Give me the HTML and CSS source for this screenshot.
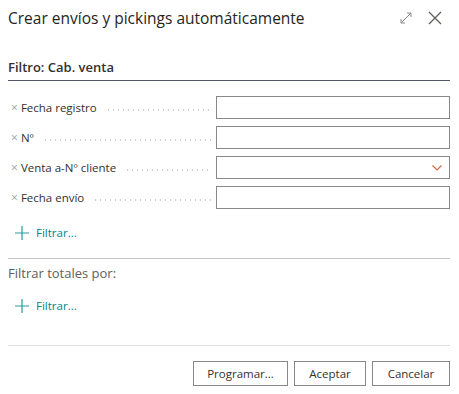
FILE: index.html
```html
<!DOCTYPE html>
<html lang="es">
<head>
  <meta charset="UTF-8">
  <title>Crear envíos y pickings automáticamente</title>
  <link rel="stylesheet" href="styles.css">
</head>
<body>
  <div class="dialog">
    <header class="dialog-head">
      <h1>Crear envíos y pickings automáticamente</h1>
      <div class="head-icons">
        <svg class="icon" width="14" height="14" viewBox="0 0 14 14">
          <path d="M2 12 L12 2 M8 2 H12 V6 M2 8 V12 H6" fill="none" stroke="#8a8886" stroke-width="1"/>
        </svg>
        <svg class="icon close" width="14" height="14" viewBox="0 0 14 14">
          <path d="M1 1 L13 13 M13 1 L1 13" fill="none" stroke="#605e5c" stroke-width="1.3"/>
        </svg>
      </div>
    </header>

    <h2 class="section-title">Filtro: Cab. venta</h2>

    <div class="filters">
      <div class="filter-row">
        <label class="filter-label"><span class="remove">×</span><span class="name">Fecha registro</span><span class="leader"></span></label>
        <div class="field"></div>
      </div>
      <div class="filter-row">
        <label class="filter-label"><span class="remove">×</span><span class="name">Nº</span><span class="leader"></span></label>
        <div class="field"></div>
      </div>
      <div class="filter-row">
        <label class="filter-label"><span class="remove">×</span><span class="name">Venta a-Nº cliente</span><span class="leader"></span></label>
        <div class="field select">
          <svg width="10" height="6" viewBox="0 0 10 6"><path d="M0.5 0.5 L5 5 L9.5 0.5" fill="none" stroke="#d06a3c" stroke-width="1.2"/></svg>
        </div>
      </div>
      <div class="filter-row">
        <label class="filter-label"><span class="remove">×</span><span class="name">Fecha envío</span><span class="leader"></span></label>
        <div class="field"></div>
      </div>
    </div>

    <a class="add-filter first">
      <svg width="14" height="14" viewBox="0 0 14 14"><path d="M7 0 V14 M0 7 H14" stroke="#2a9c9c" stroke-width="1.2"/></svg>
      Filtrar...
    </a>

    <div class="totals">
      <p class="totals-title">Filtrar totales por:</p>
      <a class="add-filter">
        <svg width="14" height="14" viewBox="0 0 14 14"><path d="M7 0 V14 M0 7 H14" stroke="#2a9c9c" stroke-width="1.2"/></svg>
        Filtrar...
      </a>
    </div>

    <footer class="dialog-foot">
      <button class="btn btn-prog">Programar...</button>
      <button class="btn btn-ok">Aceptar</button>
      <button class="btn btn-cancel">Cancelar</button>
    </footer>
  </div>
</body>
</html>
```

FILE: styles.css
```css
body {
  margin: 0;
  font-family: 'Open Sans', 'Noto Sans', sans-serif;
  color: #323130;
  background-color: white;
}
.dialog {
  width: 442px;
  padding: 0 9px 0 8px;
}
.dialog-head {
  display: flex;
  align-items: center;
  justify-content: space-between;
  height: 36px;
}
.dialog-head h1 {
  margin: 0;
  font-size: 15.5px;
  font-weight: 400;
  color: #252423;
}
.head-icons {
  display: flex;
  gap: 15px;
  align-items: center;
  margin-right: 8px;
}
.section-title {
  margin: 22px 0 0;
  font-size: 13px;
  font-weight: 600;
  padding-bottom: 4px;
  border-bottom: 1px solid #505a66;
}
.filters {
  display: flex;
  flex-direction: column;
  gap: 7px;
  margin-top: 15px;
}
.filter-row {
  display: flex;
  align-items: center;
}
.filter-label {
  display: flex;
  align-items: center;
  width: 208px;
  font-size: 11.5px;
  color: #323130;
}
.remove {
  color: #a19f9d;
  font-size: 12px;
  margin: 0 3px 0 3px;
}
.leader {
  flex: 1;
  height: 2px;
  margin: 4px 4px 0 9px;
  background-image: radial-gradient(circle, #cfcfcf 0.9px, transparent 1.1px);
  background-size: 5px 2px;
}
.field {
  flex: 1;
  height: 21px;
  border: 1px solid #8a8886;
  display: flex;
  align-items: center;
  justify-content: flex-end;
}
.field.select svg {
  margin-right: 7px;
}
.add-filter {
  display: flex;
  align-items: center;
  gap: 7px;
  padding-left: 7px;
  font-size: 11.5px;
  color: #00858a;
}
.add-filter.first {
  margin: 16px 0 0;
  padding-bottom: 18px;
  border-bottom: 1px solid #c8c6c4;
}
.totals-title {
  margin: 5px 0 0;
  font-size: 13px;
  color: #605e5c;
}
.totals .add-filter {
  margin-top: 16px;
}
.dialog-foot {
  margin-top: 32px;
  border-top: 1px solid #e1dfdd;
  padding-top: 15px;
  display: flex;
  justify-content: flex-end;
  gap: 6px;
}
.btn {
  height: 25px;
  padding: 0;
  background: white;
  border: 1px solid #8a8886;
  font-family: inherit;
  font-size: 11.5px;
  color: #323130;
}
.btn-prog { width: 95px; }
.btn-ok { width: 72px; }
.btn-cancel { width: 78px; }
```
